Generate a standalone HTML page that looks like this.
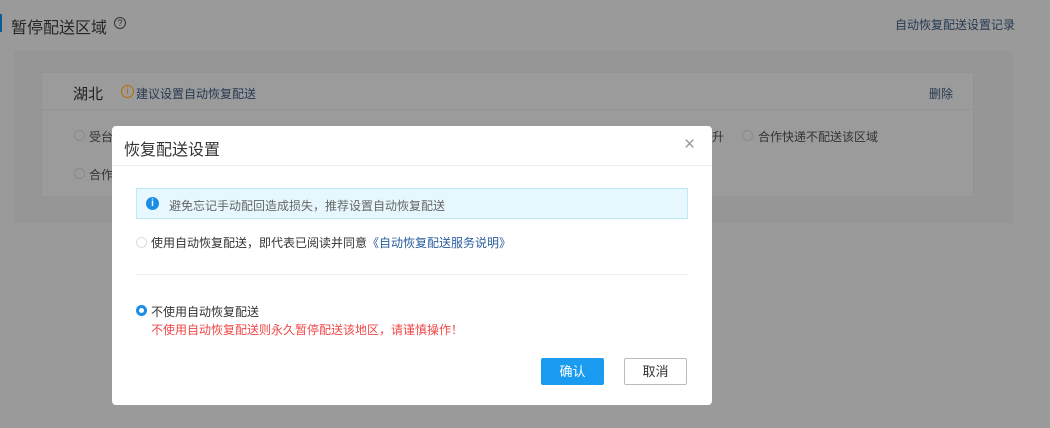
<!DOCTYPE html>
<html><head><meta charset="utf-8"><style>
*{margin:0;padding:0;box-sizing:border-box}
body{width:1050px;height:428px;overflow:hidden;background:#9a9a9a;font-family:"Liberation Sans","Noto Sans CJK SC",sans-serif;position:relative;color:#333}
.a{position:absolute;white-space:nowrap}
.rad{position:absolute;width:11px;height:11px;border:1px solid #ccc;border-radius:50%;background:#fff}
</style></head><body>
<div class="a" style="left:0;top:14px;width:2px;height:18px;background:#0d5b95"></div>
<div class="a" style="left:11px;top:14px;font-size:16px;color:#262626">暂停配送区域</div>
<div class="a" style="left:114px;top:17px;width:12px;height:12px;border:1px solid #333;border-radius:50%;font-size:9px;line-height:10px;text-align:center;color:#333">?</div>
<div class="a" style="left:895px;top:16px;font-size:12px;color:#263a52">自动恢复配送设置记录</div>
<div class="a" style="left:14px;top:51px;width:999px;height:172px;background:#969696"></div>
<div class="a" style="left:41px;top:72px;width:933px;height:125px;background:#9b9b9b;border:1px solid #939393"></div>
<div class="a" style="left:41px;top:109px;width:933px;height:1px;background:#939393"></div>
<div class="a" style="left:73px;top:83px;font-size:15px;color:#1f1f1f">湖北</div>
<div class="a" style="left:121px;top:85px;width:13px;height:13px;border:1px solid #b86a00;border-radius:50%;font-size:10px;line-height:11px;text-align:center;color:#b86a00">i</div>
<div class="a" style="left:136px;top:85px;font-size:12px;color:#263a52">建议设置自动恢复配送</div>
<div class="a" style="left:929px;top:85px;font-size:12px;color:#263a52">删除</div>
<div class="rad" style="left:74px;top:130px;background:#9b9b9b;border-color:#8a8a8a"></div>
<div class="a" style="left:89px;top:128px;font-size:12px;color:#333">受台</div>
<div class="rad" style="left:74px;top:168px;background:#9b9b9b;border-color:#8a8a8a"></div>
<div class="a" style="left:89px;top:166px;font-size:12px;color:#333">合作</div>
<div class="a" style="left:712px;top:128px;font-size:12px;color:#333">升</div>
<div class="rad" style="left:742px;top:130px;background:#9b9b9b;border-color:#8a8a8a"></div>
<div class="a" style="left:758px;top:128px;font-size:12px;color:#333">合作快递不配送该区域</div>

<div class="a" style="left:112px;top:126px;width:600px;height:279px;background:#fff;border-radius:4px"></div>
<div class="a" style="left:112px;top:165px;width:600px;height:1px;background:#ececec"></div>
<div class="a" style="left:124px;top:136px;font-size:16px;color:#333">恢复配送设置</div>
<div class="a" style="left:684px;top:134px;font-size:19px;color:#999;font-weight:300">×</div>
<div class="a" style="left:136px;top:188px;width:552px;height:31px;background:#e6f8fe;border:1px solid #bde9f8"></div>
<div class="a" style="left:146px;top:197px;width:13px;height:13px;background:#1a8ee6;border-radius:50%;color:#fff;font-size:10px;line-height:13px;text-align:center;font-weight:bold">i</div>
<div class="a" style="left:169px;top:197px;font-size:12px;color:#666">避免忘记手动配回造成损失，推荐设置自动恢复配送</div>
<div class="rad" style="left:136px;top:237px;border-color:#ddd"></div>
<div class="a" style="left:151px;top:234px;font-size:12px;color:#333">使用自动恢复配送，即代表已阅读并同意<span style="color:#2a5d9e">《自动恢复配送服务说明》</span></div>
<div class="a" style="left:136px;top:274px;width:552px;height:1px;background:#eee"></div>
<div class="rad" style="left:136px;top:305px;border:3px solid #1a8ee6;width:11px;height:11px"></div>
<div class="a" style="left:151px;top:303px;font-size:12px;color:#333">不使用自动恢复配送</div>
<div class="a" style="left:151px;top:321px;font-size:12px;color:#f04848">不使用自动恢复配送则永久暂停配送该地区，请谨慎操作！</div>
<div class="a" style="left:541px;top:358px;width:63px;height:27px;background:#1a9bf0;border-radius:2px;color:#fff;font-size:13px;line-height:27px;text-align:center">确认</div>
<div class="a" style="left:624px;top:358px;width:63px;height:27px;border:1px solid #bbb;border-radius:2px;color:#333;font-size:13px;line-height:25px;text-align:center;background:#fff">取消</div>
</body></html>
